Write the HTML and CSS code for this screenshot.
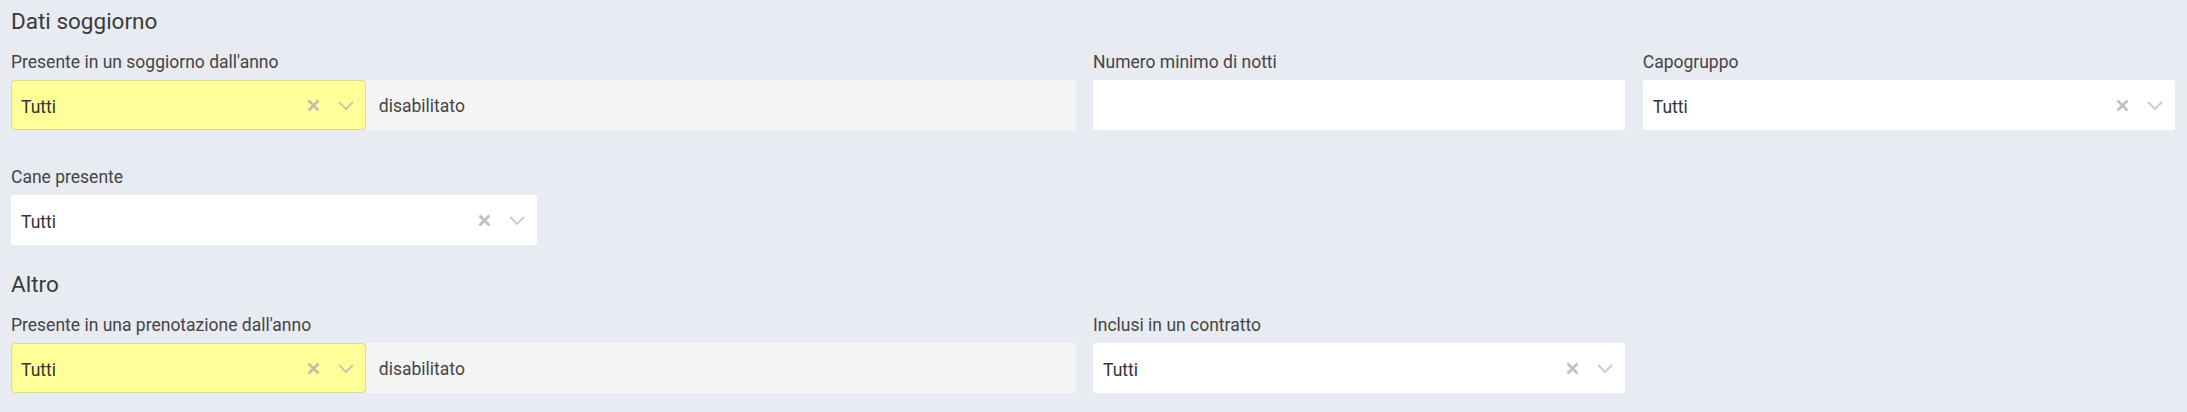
FILE: index.html
```html
<!DOCTYPE html>
<html lang="it">
<head>
<meta charset="utf-8">
<title>Filtri</title>
<link rel="stylesheet" href="styles.css">
</head>
<body>
<div class="page">
  <section class="section">
    <h2 class="section-title">Dati soggiorno</h2>
    <div class="row row-main">
      <div class="field">
        <label class="field-label">Presente in un soggiorno dall'anno</label>
        <div class="combo">
          <div class="select select-highlight">
            <span class="select-value">Tutti</span>
            <span class="select-icons">
              <svg class="icon-clear" width="13" height="13" viewBox="0 0 13 13"><path d="M1.5 1.5 L11.5 11.5 M11.5 1.5 L1.5 11.5" /></svg>
              <svg class="icon-chevron" width="16" height="9" viewBox="0 0 16 9"><path d="M1 1 L8 8 L15 1" /></svg>
            </span>
          </div>
          <div class="disabled-field">disabilitato</div>
        </div>
      </div>
      <div class="field">
        <label class="field-label">Numero minimo di notti</label>
        <div class="input"></div>
      </div>
      <div class="field">
        <label class="field-label">Capogruppo</label>
        <div class="select">
          <span class="select-value">Tutti</span>
          <span class="select-icons">
            <svg class="icon-clear" width="13" height="13" viewBox="0 0 13 13"><path d="M1.5 1.5 L11.5 11.5 M11.5 1.5 L1.5 11.5" /></svg>
            <svg class="icon-chevron" width="16" height="9" viewBox="0 0 16 9"><path d="M1 1 L8 8 L15 1" /></svg>
          </span>
        </div>
      </div>
    </div>
    <div class="row row-quarter">
      <div class="field">
        <label class="field-label">Cane presente</label>
        <div class="select">
          <span class="select-value">Tutti</span>
          <span class="select-icons">
            <svg class="icon-clear" width="13" height="13" viewBox="0 0 13 13"><path d="M1.5 1.5 L11.5 11.5 M11.5 1.5 L1.5 11.5" /></svg>
            <svg class="icon-chevron" width="16" height="9" viewBox="0 0 16 9"><path d="M1 1 L8 8 L15 1" /></svg>
          </span>
        </div>
      </div>
    </div>
  </section>
  <section class="section section-next">
    <h2 class="section-title">Altro</h2>
    <div class="row row-main">
      <div class="field">
        <label class="field-label">Presente in una prenotazione dall'anno</label>
        <div class="combo">
          <div class="select select-highlight">
            <span class="select-value">Tutti</span>
            <span class="select-icons">
              <svg class="icon-clear" width="13" height="13" viewBox="0 0 13 13"><path d="M1.5 1.5 L11.5 11.5 M11.5 1.5 L1.5 11.5" /></svg>
              <svg class="icon-chevron" width="16" height="9" viewBox="0 0 16 9"><path d="M1 1 L8 8 L15 1" /></svg>
            </span>
          </div>
          <div class="disabled-field">disabilitato</div>
        </div>
      </div>
      <div class="field">
        <label class="field-label">Inclusi in un contratto</label>
        <div class="select">
          <span class="select-value">Tutti</span>
          <span class="select-icons">
            <svg class="icon-clear" width="13" height="13" viewBox="0 0 13 13"><path d="M1.5 1.5 L11.5 11.5 M11.5 1.5 L1.5 11.5" /></svg>
            <svg class="icon-chevron" width="16" height="9" viewBox="0 0 16 9"><path d="M1 1 L8 8 L15 1" /></svg>
          </span>
        </div>
      </div>
    </div>
  </section>
</div>
</body>
</html>
```
FILE: styles.css
```css
html, body {
  margin: 0;
  padding: 0;
  background: #e8ebf2;
}

body {
  font-family: Roboto, "Liberation Sans", sans-serif;
  color: #333;
}

.page {
  padding: 8px 12px 0 11px;
}

.section-title {
  margin: 0;
  font-size: 22.5px;
  line-height: 26px;
  font-weight: 400;
  color: #3a3a3a;
}

.section-next {
  margin-top: 26px;
}

.row {
  display: grid;
  margin-top: 17px;
}

.row + .row {
  margin-top: 36px;
}

.row-main {
  grid-template-columns: 2fr 1fr 1fr;
  column-gap: 17.5px;
}

.row-quarter {
  grid-template-columns: repeat(4, 1fr);
  column-gap: 20px;
}

.field {
  display: flex;
  flex-direction: column;
  min-width: 0;
}

.field-label {
  font-size: 17.5px;
  line-height: 22px;
  color: #454545;
  margin-bottom: 7px;
}

.combo {
  display: grid;
  grid-template-columns: 1fr 2fr;
}

.select,
.input,
.disabled-field {
  box-sizing: border-box;
  height: 50px;
  font-size: 17.5px;
  line-height: 22px;
}

.select {
  display: flex;
  align-items: center;
  justify-content: space-between;
  background: #fff;
  border: 1px solid #fff;
  border-radius: 2px;
  padding: 3px 11px 0 9px;
  color: #333;
}

.select-highlight {
  background: #ffff99;
  border-color: #d9d98f;
  border-radius: 4px;
}

.select-icons {
  display: flex;
  align-items: center;
  gap: 18px;
  margin-top: -2px;
}

.icon-clear path {
  stroke: #c0c0c0;
  stroke-width: 2.6;
  fill: none;
}

.select-highlight .icon-clear path {
  stroke: #bfbfa8;
}

.icon-chevron path {
  stroke: #cacaca;
  stroke-width: 1.8;
  fill: none;
}

.select-highlight .icon-chevron path {
  stroke: #c8c8a8;
}

.input {
  background: #fff;
}

.disabled-field {
  display: flex;
  align-items: center;
  background: #f4f4f4;
  padding: 1px 13px 0;
  color: #454545;
}
```
